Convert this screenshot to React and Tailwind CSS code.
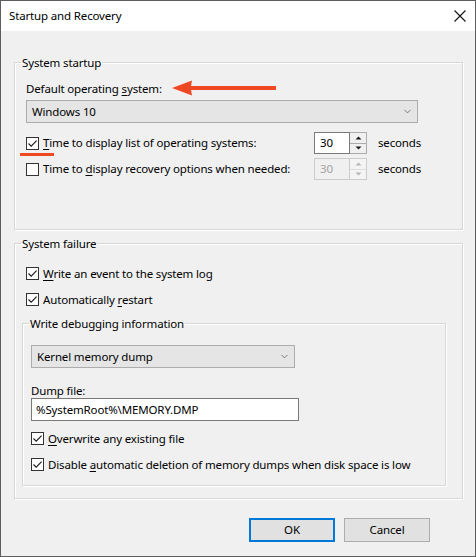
import { ChevronDown } from 'lucide-react';

function CheckBox({ checked = false }) {
  return (
    <span className="flex h-[13px] w-[13px] shrink-0 items-center justify-center border border-[#333333] bg-white">
      {checked && (
        <svg width="11" height="11" viewBox="0 0 11 11">
          <path d="M1.5 5.5 L4.2 8.2 L9.6 2.6" fill="none" stroke="#1a1a1a" strokeWidth="1.1" />
        </svg>
      )}
    </span>
  );
}

function CheckRow({ checked, children, className = '' }) {
  return (
    <div className={`flex h-[20px] items-center gap-[4px] ${className}`}>
      <CheckBox checked={checked} />
      <span className="leading-[15px]">{children}</span>
    </div>
  );
}

function Key({ children }) {
  return <span className="underline decoration-[1px] underline-offset-[2px]">{children}</span>;
}

function SpinArrow({ up, color }) {
  return (
    <svg width="7" height="4" viewBox="0 0 7 4">
      <path d={up ? 'M0.5 3.5 L3.5 0.5 L6.5 3.5 Z' : 'M0.5 0.5 L3.5 3.5 L6.5 0.5 Z'} fill={color} />
    </svg>
  );
}

function SpinBox({ value, disabled = false }) {
  const arrow = disabled ? '#b5b5b5' : '#1a1a1a';
  return (
    <div className="flex h-[22px] w-[53px]">
      <div
        className={`flex flex-1 items-center border pl-[5px] ${
          disabled ? 'border-[#cccccc] bg-[#f0f0f0] text-[#a3a3a3]' : 'border-[#7a7a7a] bg-white text-black'
        }`}
      >
        {value}
      </div>
      <div className={`flex w-[17px] flex-col border border-l-0 ${disabled ? 'border-[#cccccc]' : 'border-[#acacac]'}`}>
        <div className={`flex flex-1 items-center justify-center border-b ${disabled ? 'border-[#dddddd] bg-[#f4f4f4]' : 'border-[#acacac] bg-[#f0f0f0]'}`}>
          <SpinArrow up color={arrow} />
        </div>
        <div className={`flex flex-1 items-center justify-center ${disabled ? 'bg-[#f4f4f4]' : 'bg-[#f0f0f0]'}`}>
          <SpinArrow color={arrow} />
        </div>
      </div>
    </div>
  );
}

function ComboBox({ value, width }) {
  return (
    <div
      className="flex h-[23px] items-center justify-between border border-[#acacac] bg-[#e5e5e5] pl-[5px] pr-[4px]"
      style={{ width }}
    >
      <span>{value}</span>
      <ChevronDown size={11} strokeWidth={1.6} className="text-[#555555]" />
    </div>
  );
}

// etched group box; the legend sits 6px in from the frame, the body gets its own padding
function Group({ label, className = '', bodyClass = '', children }) {
  return (
    <fieldset
      className={`border border-[#d7d7d7] shadow-[inset_1px_1px_0_#ffffff,1px_1px_0_#ffffff] ${className}`}
    >
      <legend className="ml-[6px] px-[1px] leading-[15px]">{label}</legend>
      <div className={bodyClass}>{children}</div>
    </fieldset>
  );
}

export default function App() {
  return (
    <div className="flex h-[557px] w-[476px] flex-col border border-[#5e5e5e] bg-[#f0f0f0] text-[11.5px] tracking-[-0.15px] text-black font-['Noto_Sans',sans-serif]">
      {/* title bar */}
      <div className="flex h-[30px] shrink-0 items-center justify-between bg-white pl-[8px] pr-[8px]">
        <span>Startup and Recovery</span>
        <svg width="12" height="12" viewBox="0 0 12 12" className="mr-[1px]">
          <path d="M0.5 0.5 L11.5 11.5 M11.5 0.5 L0.5 11.5" stroke="#111111" strokeWidth="1.1" />
        </svg>
      </div>

      <div className="flex flex-col px-[13px] pt-[24px]">
        <Group label="System startup" className="h-[175px] w-[449px]" bodyClass="pl-[11px]">
          <div className="relative mt-[11px] leading-[15px]">
            Default operating <Key>s</Key>ystem:
            <svg
              width="106"
              height="16"
              viewBox="0 0 106 16"
              className="absolute left-[146px] top-[-1px]"
            >
              <path d="M0 8 L20 0.5 L19 6 L104 6 L104 10 L19 10 L20 15.5 Z" fill="#ef4923" />
            </svg>
          </div>
          <div className="mt-[4px]">
            <ComboBox value="Windows 10" width={392} />
          </div>
          <div className="relative mt-[9px] flex h-[22px] items-center">
            <CheckBox checked />
            <span className="ml-[4px] w-[271px]">
              <Key>T</Key>ime to display list of operating systems:
            </span>
            <SpinBox value="30" />
            <span className="ml-[11px]">seconds</span>
            <span className="absolute left-[-6px] top-[21px] h-[3px] w-[34px] bg-[#ef4923]" />
          </div>
          <div className="mt-[4px] flex h-[22px] items-center">
            <CheckBox />
            <span className="ml-[4px] w-[271px]">
              Time to <Key>d</Key>isplay recovery options when needed:
            </span>
            <SpinBox value="30" disabled />
            <span className="ml-[11px]">seconds</span>
          </div>
        </Group>

        <Group label="System failure" className="mt-[6px] h-[263px] w-[449px]" bodyClass="pl-[7px]">
          <CheckRow checked className="ml-[4px] mt-[12px]">
            <Key>W</Key>rite an event to the system log
          </CheckRow>
          <CheckRow checked className="ml-[4px] mt-[6px]">
            Automatically <Key>r</Key>estart
          </CheckRow>

          <Group
            label="Write debugging information"
            className="mt-[7px] h-[170px] w-[424px]"
            bodyClass="pl-[8px]"
          >
            <div className="mt-[14px]">
              <ComboBox value="Kernel memory dump" width={264} />
            </div>
            <div className="mt-[15px] leading-[15px]">Dump file:</div>
            <div className="flex h-[23px] w-[268px] items-center border border-[#7a7a7a] bg-white pl-[4px]">
              %SystemRoot%\MEMORY.DMP
            </div>
            <CheckRow checked className="mt-[7px]">
              <Key>O</Key>verwrite any existing file
            </CheckRow>
            <CheckRow checked className="mt-[6px]">
              Disable <Key>a</Key>utomatic deletion of memory dumps when disk space is low
            </CheckRow>
          </Group>
        </Group>
      </div>

      <div className="mt-[19px] flex justify-end gap-[9px] pr-[45px]">
        <button className="h-[24px] w-[86px] border-2 border-[#0078d7] bg-[#e1e1e1]">OK</button>
        <button className="h-[24px] w-[86px] border border-[#adadad] bg-[#e1e1e1]">Cancel</button>
      </div>
    </div>
  );
}
